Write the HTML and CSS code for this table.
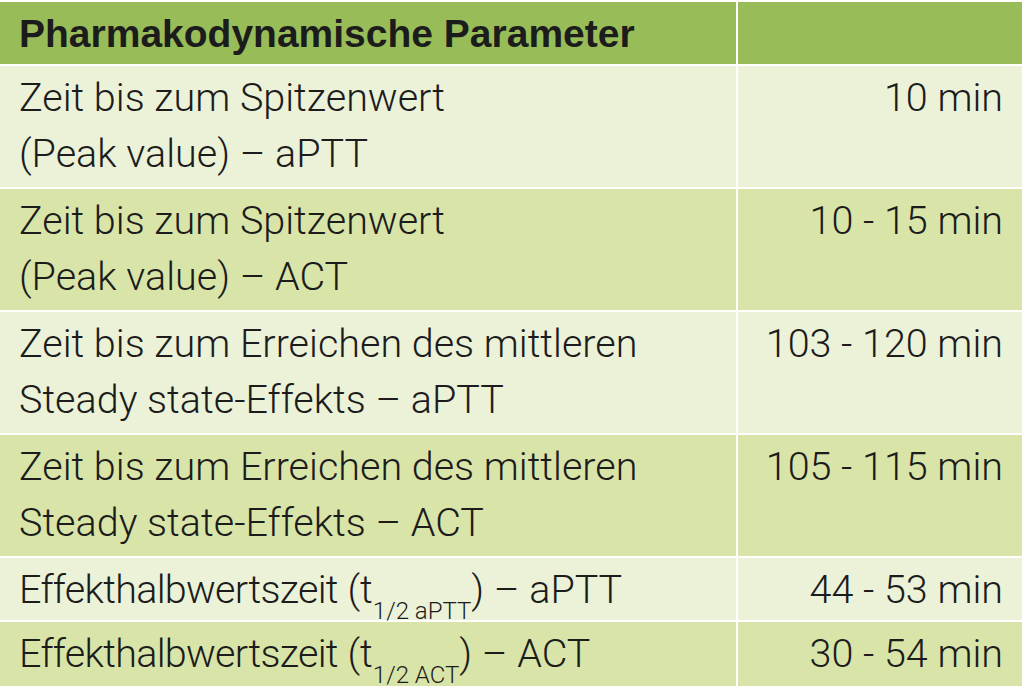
FILE: index.html
```html
<!DOCTYPE html>
<html lang="de">
<head>
<meta charset="utf-8">
<title>Pharmakodynamische Parameter</title>
<link rel="stylesheet" href="styles.css">
</head>
<body>
<div class="table">
  <div class="cell head">Pharmakodynamische Parameter</div>
  <div class="cell head"></div>

  <div class="cell light">Zeit bis zum Spitzenwert<br>(Peak value) – aPTT</div>
  <div class="cell light num">10 min</div>

  <div class="cell dark">Zeit bis zum Spitzenwert<br>(Peak value) – ACT</div>
  <div class="cell dark num">10 - 15 min</div>

  <div class="cell light">Zeit bis zum Erreichen des mittleren<br>Steady state-Effekts – aPTT</div>
  <div class="cell light num">103 - 120 min</div>

  <div class="cell dark">Zeit bis zum Erreichen des mittleren<br>Steady state-Effekts – ACT</div>
  <div class="cell dark num">105 - 115 min</div>

  <div class="cell light short"><span class="cond">Effekthalbwertszeit</span> (t<sub>1/2 aPTT</sub>) – aPTT</div>
  <div class="cell light num short">44 - 53 min</div>

  <div class="cell dark last"><span class="cond">Effekthalbwertszeit</span> (t<sub>1/2 ACT</sub>) – ACT</div>
  <div class="cell dark num last">30 - 54 min</div>
</div>
</body>
</html>
```

FILE: styles.css
```css
html, body {
  margin: 0;
  padding: 0;
  background: #ffffff;
}

body {
  font-family: Roboto, "Liberation Sans", Arial, sans-serif;
  color: #1c1c1c;
}

.table {
  display: grid;
  grid-template-columns: 736px 284px;
  gap: 2px;
  width: 1022px;
  margin-top: 2px;
}

.cell {
  font-size: 39.5px;
  font-weight: 300;
  line-height: 56px;
  padding: 4px 19px 5px 19px;
  white-space: nowrap;
}

.head {
  background: #98bd58;
  font-family: "Liberation Sans", Arial, sans-serif;
  font-size: 39px;
  font-weight: bold;
  padding-bottom: 2px;
  height: 56px;
}

.light {
  background: #ebf2d8;
}

.dark {
  background: #d9e5a8;
}

.num {
  text-align: right;
}

.short {
  padding-bottom: 2px;
}

.last {
  padding-bottom: 4px;
}

.cond {
  letter-spacing: -0.7px;
}

sub {
  font-size: 24px;
  line-height: 0;
  vertical-align: -16px;
}
```
